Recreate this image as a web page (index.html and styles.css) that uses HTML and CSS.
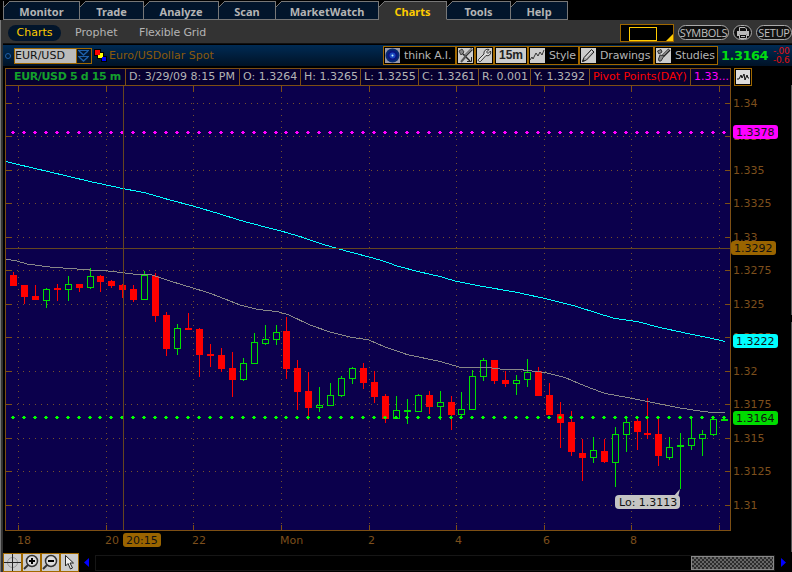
FILE: index.html
```
<!DOCTYPE html>
<html lang="en">
<head>
  <meta charset="UTF-8">
  <title>Charts</title>
  <link rel="stylesheet" href="styles.css">
</head>
<body>
<div class="app">

  <nav class="tabs">
    <a class="tab monitor"><svg class="cut" viewBox="0 0 6 6"><path d="M0 0H6L0 6Z"/><path class="edge" d="M0 6L6 0"/></svg><span>Monitor</span></a>
    <a class="tab trade"><svg class="cut" viewBox="0 0 6 6"><path d="M0 0H6L0 6Z"/><path class="edge" d="M0 6L6 0"/></svg><span>Trade</span></a>
    <a class="tab analyze"><svg class="cut" viewBox="0 0 6 6"><path d="M0 0H6L0 6Z"/><path class="edge" d="M0 6L6 0"/></svg><span>Analyze</span></a>
    <a class="tab scan"><svg class="cut" viewBox="0 0 6 6"><path d="M0 0H6L0 6Z"/><path class="edge" d="M0 6L6 0"/></svg><span>Scan</span></a>
    <a class="tab market"><svg class="cut" viewBox="0 0 6 6"><path d="M0 0H6L0 6Z"/><path class="edge" d="M0 6L6 0"/></svg><span>MarketWatch</span></a>
    <a class="tab charts active"><svg class="cut" viewBox="0 0 6 6"><path d="M0 0H6L0 6Z"/><path class="edge" d="M0 6L6 0"/></svg><span>Charts</span></a>
    <a class="tab tools"><svg class="cut" viewBox="0 0 6 6"><path d="M0 0H6L0 6Z"/><path class="edge" d="M0 6L6 0"/></svg><span>Tools</span></a>
    <a class="tab help"><svg class="cut" viewBox="0 0 6 6"><path d="M0 0H6L0 6Z"/><path class="edge" d="M0 6L6 0"/></svg><span>Help</span></a>
  </nav>

  <div class="subnav">
    <a class="sub selected">Charts</a>
    <a class="sub prophet">Prophet</a>
    <a class="sub flex">Flexible Grid</a>
    <div class="subright">
      <div class="layout">
        <svg width="52" height="16" viewBox="0 0 52 16"><rect x="8.5" y="2.500" width="27" height="13" fill="none" stroke="#fc0"/><path d="M52 9V16H45Z" fill="#fc0"/></svg>
      </div>
      <button class="pill symbols">SYMBOLS</button>
      <button class="pill print">
        <svg width="14" height="12" viewBox="0 0 14 12"><path d="M3.500 4V.5H9L10.500 2V4" fill="none" stroke="#bbb"/><path d="M1 4H13V9H11V7H3V9H1Z" fill="#bbb"/><path d="M3.500 7.500H10.500V11.500H3.500Z" fill="#111" stroke="#bbb"/><path d="M5 9.500H9" stroke="#bbb"/></svg>
      </button>
      <button class="pill setup">SETUP</button>
    </div>
  </div>

  <div class="toolbar">
    <i class="link"></i>
    <div class="symbol">EUR/USD</div>
    <div class="drop"><svg width="13" height="14" viewBox="0 0 13 14"><path d="M1 1.500H12M1 7.500H12" stroke="#1e5fa8"/><path d="M2 2L6.500 6L11 2M2 8L6.500 12L11 8" fill="none" stroke="#1e5fa8" stroke-width="1.500"/></svg></div>
    <svg class="flags" width="13" height="13" viewBox="0 0 13 13"><path d="M0 0H7V7H0Z" fill="#000"/><path d="M7 7H13V13H7Z" fill="#000"/><path d="M3 3H10V10H3Z" fill="#000"/><path d="M4 4H9V9H4Z" fill="#ff0"/><path d="M1 1H6V6H1Z" fill="#f00"/><path d="M8 8H12V12H8Z" fill="#00f"/></svg>
    <div class="name">Euro/USDollar Spot</div>
    <div class="tools-row">
      <div class="tool think">
        <svg width="15" height="15" viewBox="0 0 15 15"><rect width="15" height="15" fill="#99a"/><circle cx="7.500" cy="7.500" r="7" fill="#062a70"/><circle cx="7.500" cy="7.500" r="5" fill="#0a1480"/><circle cx="7.500" cy="7.500" r="3" fill="#1b48c0"/><circle cx="7.500" cy="7.500" r="1" fill="#cff"/></svg>
        <span>think A.I.</span>
      </div>
      <div class="tool icon"><svg width="15" height="15" viewBox="0 0 15 15"><rect width="15" height="15" fill="#ccc"/><path d="M4 5L12 13" stroke="#222" stroke-width="1.500"/><path d="M1 3L4 1L6 4L3 7Z" fill="#888" stroke="#444"/><path d="M14 1L7 8" stroke="#333" stroke-width="2.500"/><path d="M13.500 1L7 7.500" stroke="#ccc"/><path d="M8 8L3 14" stroke="#555" stroke-width="2"/><path d="M9 13.500H13.500V9" fill="none" stroke="#222"/></svg></div>
      <div class="tool icon"><svg width="15" height="15" viewBox="0 0 15 15"><rect width="15" height="15" fill="#ccc"/><path d="M12 1.500L9.500 4L11 5.500L13.500 3C14.500 6 12 8.500 9 7.500L3.500 13.500C2 14 .7 12.500 1.500 11.500L7 6C6.500 3 9 .5 12 1.500Z" fill="#ddd" stroke="#333"/></svg></div>
      <div class="tool period"><b>15m</b></div>
      <div class="tool style">
        <svg width="15" height="15" viewBox="0 0 15 15"><rect width="15" height="15" fill="#ccc"/><path d="M0 12L2 9L3 11L6 5L8 8L10 4L12 7L14 2" fill="none" stroke="#333"/></svg>
        <span>Style</span>
      </div>
      <div class="tool drawings">
        <svg width="15" height="15" viewBox="0 0 15 15"><rect width="15" height="15" fill="#ccc"/><path d="M1.500 13.500L3 9.500L10.500 1.500L13 4L5.500 12Z" fill="#aaa" stroke="#222"/><path d="M4.500 10L11 3" stroke="#eee"/><path d="M1 14L4 13L2 11Z" fill="#222"/></svg>
        <span>Drawings</span>
      </div>
      <div class="tool studies">
        <svg width="15" height="15" viewBox="0 0 15 15"><rect width="15" height="15" fill="#ccc"/><path d="M13.500 1.500L7 8" stroke="#222" stroke-width="3"/><path d="M13 1.500L7 7.500" stroke="#ddd"/><path d="M1.500 3L5 1.500L6 4L3 6ZM4 7L8 8L5 13H3L2.500 11Z" fill="#888" stroke="#333"/></svg>
        <span>Studies</span>
      </div>
    </div>
    <div class="last">1.3164</div>
    <div class="change"><span>-.00</span><span>-0.6</span></div>
  </div>

  <div class="info">
    <div class="cell title">EUR/USD 5 d 15 m</div>
    <div class="cell date">D: 3/29/09 8:15 PM</div>
    <div class="cell open">O: 1.3264</div>
    <div class="cell high">H: 1.3265</div>
    <div class="cell low">L: 1.3255</div>
    <div class="cell close">C: 1.3261</div>
    <div class="cell range">R: 0.001</div>
    <div class="cell yval">Y: 1.3292</div>
    <div class="cell pivot">Pivot Points(DAY)</div>
    <div class="cell pp">1.33...</div>
    <div class="wave"><svg width="14" height="14" viewBox="0 0 14 14"><path d="M0 0H14V14H0Z" fill="#ddd"/><path d="M1 9H3L5 5L6 8L8 4L9 10L11 5L12 8H13" fill="none" stroke="#111"/></svg></div>
  </div>

  <svg id="chart" width="789" height="467" viewBox="3 85 789 467"></svg>

  <div class="footer">
    <div class="tool icon"><svg width="17" height="17" viewBox="0 0 17 17"><rect width="17" height="17" fill="#ccc"/><circle cx="8.500" cy="8.500" r="5" fill="none" stroke="#999"/><path d="M8.500 0V17M0 8.500H17" stroke="#222"/></svg></div>
    <div class="tool icon"><svg width="17" height="17" viewBox="0 0 17 17"><rect width="17" height="17" fill="#ccc"/><circle cx="9" cy="7" r="5.500" fill="#ddd" stroke="#333" stroke-width="1.500"/><path d="M6 7H12M9 4V10" stroke="#000" stroke-width="2"/><path d="M5 11L1 15" stroke="#333" stroke-width="2"/></svg></div>
    <div class="tool icon"><svg width="17" height="17" viewBox="0 0 17 17"><rect width="17" height="17" fill="#ccc"/><circle cx="9" cy="7" r="5.500" fill="#ddd" stroke="#333" stroke-width="1.500"/><path d="M6 7H12" stroke="#000" stroke-width="2"/><path d="M5 11L1 15" stroke="#333" stroke-width="2"/></svg></div>
    <div class="tool icon"><svg width="17" height="17" viewBox="0 0 17 17"><rect width="17" height="17" fill="#ccc"/><path d="M4.500 1.500V12L7 9.500L9.500 15L11.500 14L9 9H12.500Z" fill="#eee" stroke="#222"/></svg></div>
    <div class="scroll">
      <svg class="arrow" width="16" height="17" viewBox="0 0 16 17"><path d="M10 3V12L5 7.500Z" fill="#00f"/></svg>
      <div class="track"><div class="thumb"></div></div>
      <svg class="arrow" width="17" height="17" viewBox="0 0 17 17"><path d="M6 3V12L11 7.500Z" fill="#00f"/></svg>
    </div>
  </div>
</div>

<script src="chart.js"></script>
</body>
</html>
```
FILE: styles.css
```
* {
  box-sizing: border-box;
}
body {
  margin: 0;
  background-color: #000;
  font-family: "DejaVu Sans", sans-serif;
  font-size: 11px;
  color: #b4b4b4;
  overflow: hidden;
}
svg {
  display: block;
  flex: none;
}
.app {
  width: 792px;
  height: 572px;
  display: flex;
  flex-direction: column;
  padding-left: 3px;
  background: linear-gradient(to right, #777 1px, #333 1px, #333 3px, transparent 3px) 0 20px no-repeat;
}
.app > * {
  flex: none;
}

/* main tabs */
.tabs {
  display: flex;
  height: 20px;
  padding-top: 1px;
}
.tab {
  position: relative;
  display: flex;
  justify-content: center;
  align-items: center;
  height: 19px;
  padding-top: 1px;
  background-color: #02152b;
  border: 1px solid #777;
  border-left: none;
  font: bold 11px "Noto Sans", sans-serif;
}
.cut {
  position: absolute;
  left: 0;
  top: -1px;
  width: 6px;
  height: 6px;
}
.cut .edge {
  fill: none;
  stroke: #777;
}
.monitor { width: 77px; border-left: 1px solid #777; }
.trade { width: 64px; }
.analyze { width: 75px; }
.scan { width: 57px; }
.market { width: 103px; }
.charts { width: 68px; }
.tools { width: 64px; }
.help { width: 57px; }
.tab.active {
  background-color: #333;
  border-bottom-color: #333;
  color: #fc0;
}

/* second row */
.subnav {
  display: flex;
  align-items: center;
  height: 24px;
  padding: 2px 0 0 5px;
  background-color: #333;
  border-bottom: 1px solid #111;
}
.sub {
  font-size: 11px;
  line-height: 16px;
}
.selected {
  width: 53px;
  border-radius: 8px;
  background-color: #02152b;
  color: #fc0;
  text-align: center;
}
.prophet {
  margin-left: 14px;
  width: 42px;
}
.flex {
  margin-left: 22px;
  letter-spacing: -0.15px;
}
.subright {
  display: flex;
  align-items: center;
  margin-left: auto;
}
.layout {
  width: 54px;
  height: 18px;
  border: 1px solid #a06800;
  background-color: #000;
}
.pill {
  height: 15px;
  padding: 0;
  border: 1px solid #aaa;
  border-radius: 8px;
  background-color: #111;
  color: #c0c0c0;
  font: 11px/12px "Open Sans", sans-serif;
  letter-spacing: -0.3px;
}
.symbols {
  width: 51px;
  margin-left: 4px;
}
.print {
  display: flex;
  justify-content: center;
  align-items: center;
  width: 19px;
  margin-left: 4px;
}
.setup {
  width: 36px;
  margin-left: 4px;
}

/* symbol toolbar */
.toolbar {
  display: flex;
  align-items: center;
  height: 21px;
  margin-top: 1px;
  padding-left: 2px;
  background: linear-gradient(#002b54, #001226);
  overflow: hidden;
}
.toolbar > * {
  flex: none;
}
.link {
  width: 6px;
  height: 6px;
  border: 1px solid #1e5fa8;
  border-radius: 3px;
}
.symbol {
  width: 63px;
  height: 16px;
  margin-left: 3px;
  border: 1px solid #a06800;
  background-color: #bbb;
  color: #111;
  line-height: 14px;
}
.drop {
  width: 15px;
  height: 16px;
  border: 1px solid #a06800;
  border-left: none;
  background-color: #02152b;
}
.flags {
  margin-left: 2px;
}
.name {
  width: 274px;
  margin-left: 2px;
  color: #8a5a0c;
}
.tools-row {
  display: flex;
}
.tool {
  display: flex;
  align-items: center;
  flex: none;
  height: 19px;
  border: 1px solid #a06800;
  background-color: #000;
  padding-left: 1px;
}
.tool span {
  margin-left: 4px;
  white-space: nowrap;
  letter-spacing: -0.15px;
}
.think { width: 73px; }
.toolbar .icon { width: 19px; }
.period {
  width: 34px;
  justify-content: center;
  padding: 1px;
}
.period b {
  flex: 1;
  height: 15px;
  background-color: #ccc;
  color: #222;
  font: bold 12px/15px "Liberation Sans", sans-serif;
  text-align: center;
}
.style { width: 51px; }
.drawings { width: 75px; }
.studies { width: 64px; }
.last {
  margin-left: 3px;
  width: 46px;
  color: #0d1;
  font-weight: bold;
  font-size: 13px;
  letter-spacing: -0.5px;
}
.change {
  display: flex;
  flex-direction: column;
  margin-left: 6px;
  color: #e01010;
  font-size: 9px;
  line-height: 9px;
  letter-spacing: -0.3px;
  white-space: nowrap;
}

/* values above the chart */
.info {
  display: flex;
  height: 17px;
  margin-top: 2px;
  padding-left: 2px;
}
.cell {
  flex: none;
  border: 1px solid #7d4f14;
  border-right: none;
  border-bottom: none;
  background-color: #070030;
  padding-left: 3px;
  line-height: 16px;
  white-space: nowrap;
}
.title {
  width: 120px;
  padding-left: 8px;
  color: #14a02c;
  font-weight: bold;
  letter-spacing: -0.35px;
}
.date { width: 114px; }
.open { width: 61px; }
.high { width: 60px; }
.low { width: 58px; }
.close { width: 60px; }
.range { width: 52px; }
.yval { width: 59px; }
.pivot { width: 101px; color: #f00; }
.pp { width: 41px; color: #f0f; border-right: 1px solid #7d4f14; }
.wave {
  width: 18px;
  height: 18px;
  margin-left: 3px;
  padding: 1px;
  border: 1px solid #a06800;
}

/* chart */
#chart text {
  font-size: 11px;
}
#chart .axis {
  fill: #7d4f1c;
}
#chart .tag {
  fill: #111;
}

/* bottom bar */
.footer {
  display: flex;
  height: 19px;
  margin-top: 1px;
}
.footer .icon {
  width: 19px;
  height: 19px;
  padding: 0;
}
.scroll {
  display: flex;
  flex: 1;
  padding-top: 2px;
}
.track {
  display: flex;
  justify-content: flex-end;
  flex: 1;
  height: 16px;
  border: 1px solid #161616;
}
.thumb {
  width: 83px;
  height: 14px;
  border: 1px solid #888;
  background: conic-gradient(#666 25%, #2c2c2c 0 50%, #666 0 75%, #2c2c2c 0) 0 0 / 4px 4px;
}
```
FILE: chart.js
```
// x center, high, body top, body bottom, low, up (1) or down (0)
const candles = [
  [13, 272, 275, 286, 286, 0], [24, 285, 285, 297, 304, 0], [35, 285, 296, 300, 300, 0],
  [46, 288, 289, 301, 308, 1], [57, 284, 288, 290, 301, 0], [68, 276, 284, 290, 301, 1],
  [79, 284, 284, 288, 292, 0], [90, 268, 276, 288, 289, 1], [100, 275, 276, 282, 292, 0],
  [111, 280, 281, 286, 288, 0], [122, 284, 285, 290, 298, 0], [133, 285, 289, 300, 302, 0],
  [144, 271, 275, 300, 300, 1], [155, 273, 276, 316, 322, 0], [166, 312, 315, 349, 356, 0],
  [177, 324, 328, 349, 355, 1], [188, 313, 328, 330, 330, 0], [199, 328, 329, 355, 377, 0],
  [210, 344, 354, 356, 367, 0], [221, 348, 355, 369, 372, 0], [232, 352, 368, 380, 397, 0],
  [243, 358, 363, 380, 381, 1], [254, 333, 342, 364, 364, 1], [265, 325, 339, 344, 345, 1],
  [276, 325, 332, 340, 345, 1], [286, 317, 331, 369, 379, 0], [297, 360, 368, 392, 410, 0],
  [308, 372, 391, 408, 420, 0], [319, 387, 405, 408, 412, 1], [330, 383, 395, 406, 406, 1],
  [341, 376, 378, 396, 397, 1], [352, 367, 368, 379, 384, 1], [363, 363, 368, 383, 389, 0],
  [374, 371, 382, 397, 403, 0], [385, 394, 396, 419, 423, 0], [396, 396, 410, 419, 419, 1],
  [407, 399, 410, 412, 424, 1], [418, 394, 395, 412, 412, 1], [429, 391, 395, 407, 414, 0],
  [440, 391, 402, 407, 420, 1], [451, 396, 402, 415, 430, 0], [461, 392, 409, 415, 417, 1],
  [472, 370, 376, 410, 410, 1], [483, 358, 360, 377, 381, 1], [494, 360, 360, 381, 384, 0],
  [505, 371, 380, 384, 387, 0], [516, 375, 380, 384, 395, 1], [527, 359, 372, 380, 387, 1],
  [538, 367, 371, 396, 396, 0], [549, 383, 395, 415, 415, 0], [560, 402, 414, 423, 448, 0],
  [571, 411, 422, 452, 456, 0], [582, 439, 453, 458, 481, 0], [593, 437, 450, 458, 463, 1],
  [604, 439, 451, 462, 463, 0], [615, 427, 434, 463, 487, 1], [626, 418, 422, 435, 452, 1],
  [637, 418, 421, 432, 450, 0], [647, 398, 433, 435, 439, 0], [658, 418, 434, 456, 466, 0],
  [669, 437, 447, 458, 460, 1], [680, 433, 445, 447, 489, 1], [691, 418, 438, 446, 450, 1],
  [702, 430, 434, 439, 456, 1], [713, 418, 419, 435, 436, 1], [724, 419, 419, 421, 421, 1]
];

const slow = '6,161.500 18,164.500 50,172 90,181.500 125,189 144,192.500 170,200 193,206 220,214 240,220.300 265,227 281,231 300,236.500 320,243.500 340,249.300 369,257 385,261.500 397,266 420,272 440,276.500 456,281.300 480,286 515,292 545,298.500 575,306 600,314 615,318.500 637,321.500 660,327.500 690,334 710,338 725,341.500';
const fast = '6,259.500 15,260.500 27,264 50,267 90,270 108,271 125,273 137,274.500 150,274.500 157,276.500 165,279.500 193,288 210,293.300 225,299 240,305 258,309.500 277,311.500 289,315 310,325 330,332 350,337 369,340 385,347 407,354.500 440,361.500 461,367.500 488,367.500 500,369 520,369.600 545,372.500 565,377.500 585,386 605,393.500 625,397 650,402 680,408 700,411 712,412.500 725,412.500';

const rows = [[103, '1.34'], [136, '1.3375'], [170, '1.335'], [203, '1.3325'], [237, '1.33'], [270, '1.3275'],
  [304, '1.325'], [337, '1.3225'], [371, '1.32'], [404, '1.3175'], [438, '1.315'], [471, '1.3125'], [505, '1.31']];
const cols = [[18, '18', 17], [106, '20', 105], [193, '22', 192], [281, 'Mon', 280], [369, '2', 368], [456, '4', 455], [544, '6', 543], [631, '8', 630], [719, '', 0]];

let out = '';
const rect = (x, y, w, h, fill) => { out += `<rect x="${x}" y="${y}" width="${w}" height="${h}" fill="${fill}"/>`; };
const text = (x, y, s, cls) => { out += `<text x="${x}" y="${y}" class="${cls}">${s}</text>`; };

const brown = '#7d4f14';
rect(5, 85, 726, 446, brown);
rect(6, 86, 724, 444, '#0b004c');

// dotted grid and ticks
rows.forEach(([y, label]) => {
  for (let x = 11; x < 718; x += 6) rect(x, y, 1, 1, '#75502c');
  rect(6, y, 6, 1, brown);
  rect(725, y, 5, 1, brown);
  text(733, y + 4, label, 'axis');
});
cols.forEach(([x, label, lx]) => {
  for (let y = 97; y < 524; y += 6) rect(x, y, 1, 1, '#75502c');
  rect(x, 86, 1, 6, brown);
  rect(x, 525, 1, 5, brown);
  if (label) text(lx, 544, label, 'axis');
});

// candles
candles.forEach(([x, hi, top, bottom, lo, up]) => {
  const color = up ? '#00e000' : '#f00';
  rect(x, hi, 1, lo - hi, color);
  rect(x - 3, top, 7, bottom - top, color);
  if (up && bottom - top > 2) rect(x - 2, top + 1, 5, bottom - top - 2, '#0b004c');
});

// averages
out += `<polyline points="${slow}" fill="none" stroke="#0ff" shape-rendering="crispEdges"/>`;
out += `<polyline points="${fast}" fill="none" stroke="#888" shape-rendering="crispEdges"/>`;

// pivot and last price levels
candles.forEach(([x]) => {
  [[132, '#f0f'], [417, '#0f0']].forEach(([y, c]) => {
    rect(x - 2, y, 4, 1, c);
    rect(x - 1, y - 1, 2, 3, c);
  });
});

// crosshair
rect(123, 86, 1, 444, '#65451f');
rect(6, 248, 724, 1, '#65451f');

// price tags
[[733, 125, '1.3378', '#f0f'], [731, 241, '1.3292', '#9a6400'], [733, 334, '1.3222', '#0ff'], [733, 411, '1.3164', '#00dc00']].forEach(([x, y, s, c]) => {
  out += `<rect x="${x}" y="${y}" width="45" height="14" rx="3" fill="${c}"/>`;
  text(x + 3, y + 11, s, 'tag');
});
out += '<rect x="123" y="533" width="38" height="14" rx="3" fill="#9a6400"/>';
text(126, 544, '20:15', 'tag');
out += '<path d="M680 489L673 497H678Z" fill="#c4c4c4"/><rect x="615" y="495" width="65" height="14" rx="4" fill="#c4c4c4"/>';
text(619, 506, 'Lo: 1.3113', 'tag');

// pane edge on the right
rect(791, 85, 1, 230, '#555');
rect(791, 322, 1, 230, '#555');

document.getElementById('chart').innerHTML = out;
```
